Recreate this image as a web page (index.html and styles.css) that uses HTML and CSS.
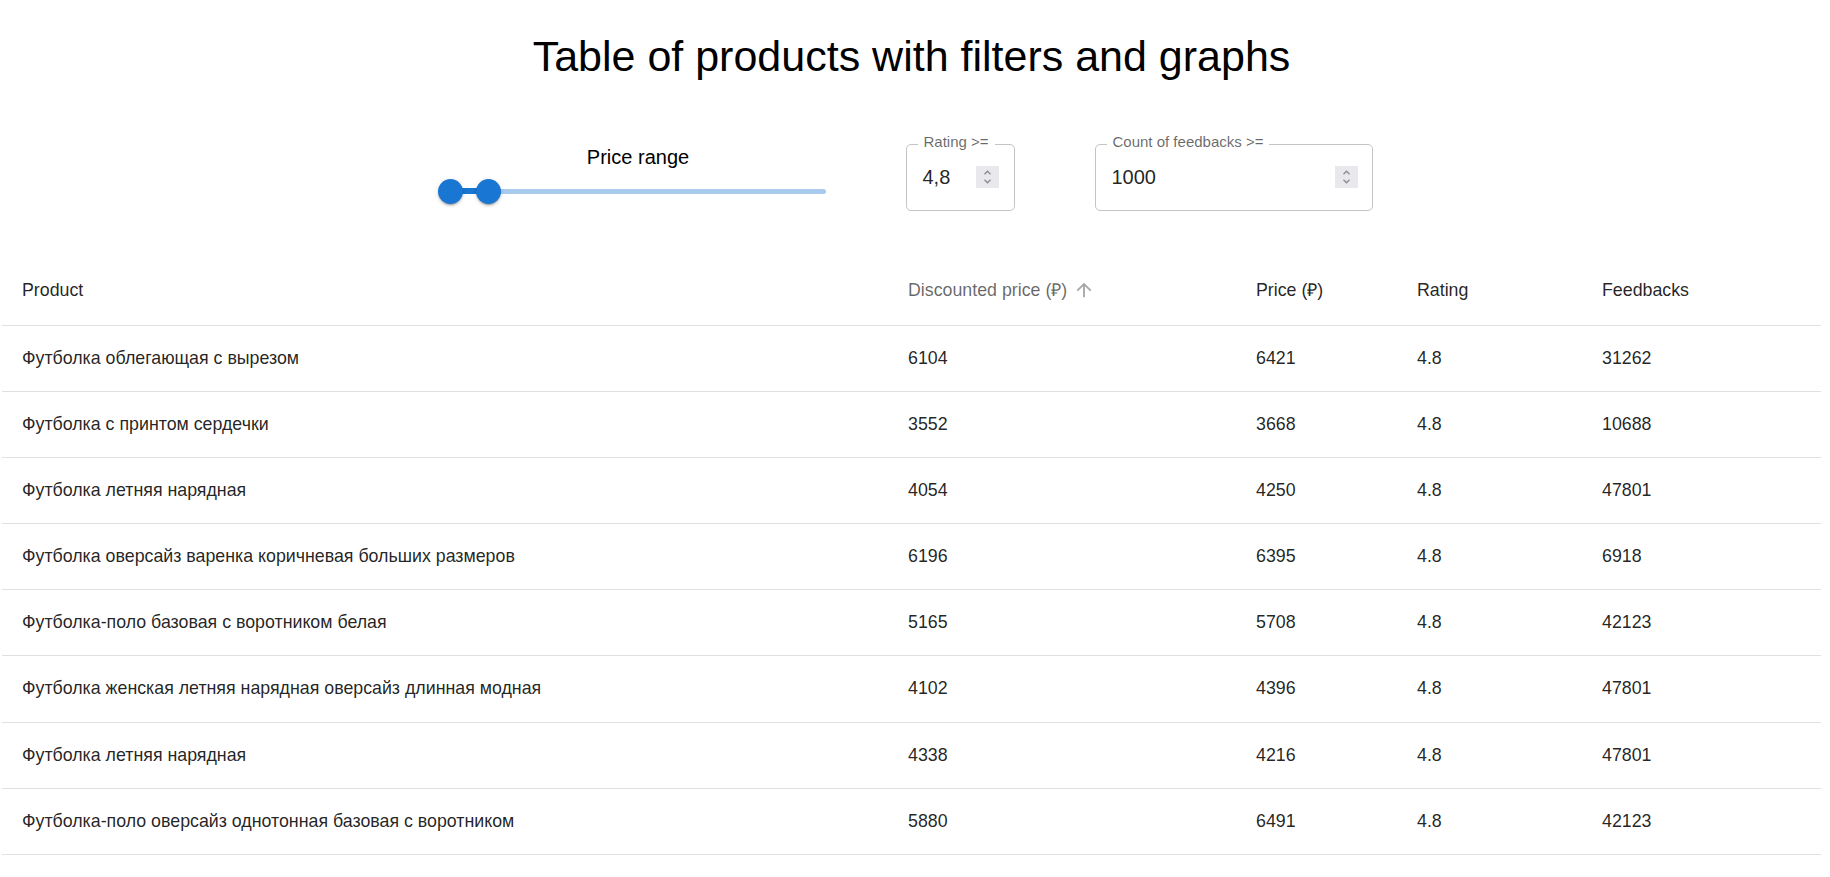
FILE: index.html
```html
<!DOCTYPE html>
<html lang="en">
<head>
<meta charset="utf-8">
<title>Table of products with filters and graphs</title>
<link rel="stylesheet" href="styles.css">
</head>
<body>
<div class="page">
  <h1 class="title">Table of products with filters and graphs</h1>

  <div class="filters">
    <div class="range">
      <div class="range-label">Price range</div>
      <div class="slider">
        <div class="rail"></div>
        <div class="track" style="left:0%;width:10%"></div>
        <div class="thumb" style="left:calc(0% - 12.5px)"></div>
        <div class="thumb" style="left:calc(10% - 12.5px)"></div>
      </div>
    </div>

    <div class="field field-rating">
      <span class="field-label">Rating &gt;=</span>
      <span class="field-value">4,8</span>
      <span class="spin">
        <svg width="23" height="22" viewBox="0 0 23 22"><path d="M8.5 8.2 11.5 5.2 14.5 8.2" fill="none" stroke="#8b8b8f" stroke-width="1.3"/><path d="M8.5 13.8 11.5 16.8 14.5 13.8" fill="none" stroke="#8b8b8f" stroke-width="1.3"/></svg>
      </span>
    </div>

    <div class="field field-feedbacks">
      <span class="field-label">Count of feedbacks &gt;=</span>
      <span class="field-value">1000</span>
      <span class="spin">
        <svg width="23" height="22" viewBox="0 0 23 22"><path d="M8.5 8.2 11.5 5.2 14.5 8.2" fill="none" stroke="#8b8b8f" stroke-width="1.3"/><path d="M8.5 13.8 11.5 16.8 14.5 13.8" fill="none" stroke="#8b8b8f" stroke-width="1.3"/></svg>
      </span>
    </div>
  </div>

  <table class="products">
    <colgroup>
      <col class="c-product">
      <col class="c-disc">
      <col class="c-price">
      <col class="c-rating">
      <col class="c-feed">
    </colgroup>
    <thead>
      <tr>
        <th>Product</th>
        <th class="sorted"><span class="sort-label">Discounted price (₽)<svg class="sort-icon" viewBox="0 0 24 24" width="22" height="22"><path d="M4 12l1.41 1.41L11 7.830V20h2V7.83l5.58 5.59L20 12l-8-8-8 8z" fill="currentColor"/></svg></span></th>
        <th>Price (₽)</th>
        <th>Rating</th>
        <th>Feedbacks</th>
      </tr>
    </thead>
    <tbody>
      <tr><td>Футболка облегающая с вырезом</td><td>6104</td><td>6421</td><td>4.8</td><td>31262</td></tr>
      <tr><td>Футболка с принтом сердечки</td><td>3552</td><td>3668</td><td>4.8</td><td>10688</td></tr>
      <tr><td>Футболка летняя нарядная</td><td>4054</td><td>4250</td><td>4.8</td><td>47801</td></tr>
      <tr><td>Футболка оверсайз варенка коричневая больших размеров</td><td>6196</td><td>6395</td><td>4.8</td><td>6918</td></tr>
      <tr><td>Футболка-поло базовая с воротником белая</td><td>5165</td><td>5708</td><td>4.8</td><td>42123</td></tr>
      <tr><td>Футболка женская летняя нарядная оверсайз длинная модная</td><td>4102</td><td>4396</td><td>4.8</td><td>47801</td></tr>
      <tr><td>Футболка летняя нарядная</td><td>4338</td><td>4216</td><td>4.8</td><td>47801</td></tr>
      <tr><td>Футболка-поло оверсайз однотонная базовая с воротником</td><td>5880</td><td>6491</td><td>4.8</td><td>42123</td></tr>
    </tbody>
  </table>
</div>
</body>
</html>
```

FILE: styles.css
```css
* { box-sizing: border-box; }

html, body {
  margin: 0;
  padding: 0;
  background: #ffffff;
}

body {
  font-family: "Liberation Sans", Arial, sans-serif;
  color: rgba(0, 0, 0, 0.87);
}

.page {
  width: 1819px;
  margin-left: 2px;
}

.title {
  margin: 31px 0 0;
  font-size: 43px;
  line-height: 50px;
  font-weight: normal;
  color: #000;
  text-align: center;
}

.filters {
  display: flex;
  justify-content: center;
  align-items: flex-start;
  gap: 80px;
  margin-top: 63px;
}

.range {
  width: 375px;
  display: flex;
  flex-direction: column;
}

.range-label {
  padding-top: 1px;
  font-size: 20px;
  line-height: 24px;
  text-align: center;
  color: #000;
}

.slider {
  position: relative;
  height: 25px;
  margin-top: 9.5px;
}

.rail {
  margin-top: 10px;
  height: 5px;
  border-radius: 3px;
  background: rgb(168, 203, 238);
}

.track {
  position: absolute;
  top: 9.5px;
  height: 6px;
  background: #1976d2;
}

.thumb {
  position: absolute;
  top: 0;
  width: 25px;
  height: 25px;
  border-radius: 50%;
  background: #1976d2;
  box-shadow: 0 3px 1px -2px rgba(0,0,0,0.2), 0 2px 2px 0 rgba(0,0,0,0.14), 0 1px 5px 0 rgba(0,0,0,0.12);
}

.field {
  position: relative;
  height: 67px;
  border: 1px solid #c4c4c4;
  border-radius: 5px;
  display: flex;
  align-items: center;
  justify-content: space-between;
  padding: 0 15px 2px 16px;
}

.field-rating { width: 109px; }
.field-feedbacks { width: 278px; padding-right: 14px; }

.field-label {
  position: absolute;
  top: -12px;
  left: 11px;
  padding: 0 6px;
  background: #ffffff;
  font-size: 15px;
  line-height: 18px;
  color: rgba(0, 0, 0, 0.6);
  white-space: nowrap;
}

.field-value {
  font-size: 20px;
  line-height: 24px;
  color: rgba(0, 0, 0, 0.87);
}

.spin {
  display: block;
  width: 23px;
  height: 22px;
  background: #e9e9ed;
}

.spin svg { display: block; }

.products {
  margin-top: 44px;
  width: 1819px;
  table-layout: fixed;
  border-collapse: collapse;
  border-spacing: 0;
}

.c-product { width: 886px; }
.c-disc { width: 348px; }
.c-price { width: 161px; }
.c-rating { width: 185px; }
.c-feed { width: 239px; }

.products th,
.products td {
  text-align: left;
  font-size: 17.8px;
  font-weight: normal;
  padding: 20px;
  border-bottom: 1px solid rgb(224, 224, 224);
  color: rgba(0, 0, 0, 0.87);
  vertical-align: middle;
  white-space: nowrap;
}

.products th {
  line-height: 30px;
}

.products td {
  line-height: 25.1px;
}

.products th.sorted {
  color: rgba(0, 0, 0, 0.6);
}

.sort-label {
  display: inline-flex;
  align-items: center;
}

.sort-icon {
  margin-left: 6px;
  color: rgba(0, 0, 0, 0.35);
}
```
